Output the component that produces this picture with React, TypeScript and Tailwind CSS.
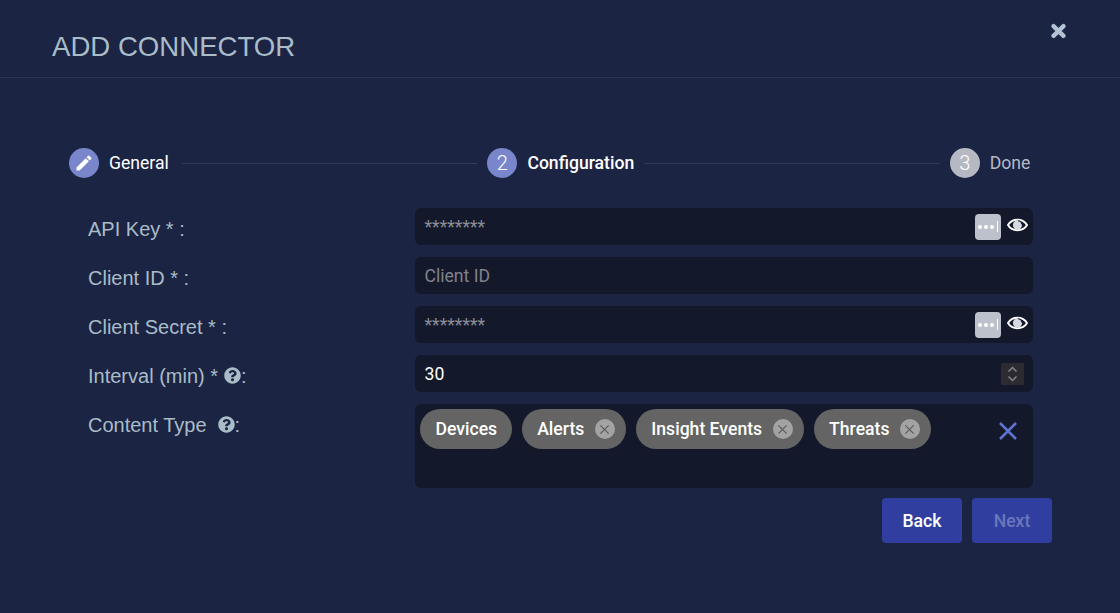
import { FaQuestionCircle } from 'react-icons/fa';
import { MdEdit } from 'react-icons/md';

function Connector({ wide = false }: { wide?: boolean }) {
    return <div className={`mr-[10px] h-px flex-1 bg-[#33395a] ${wide ? 'ml-[13px]' : 'ml-[10px]'}`} />;
}

function Step({ icon, label, state }: { icon: React.ReactNode; label: string; state: 'done' | 'active' | 'todo' }) {
    return (
        <div className="flex items-center">
            <div
                className={`flex h-[30px] w-[30px] items-center justify-center rounded-full text-[20px] font-light text-white ${state === 'todo' ? 'bg-[#b6b9c3]' : 'bg-[#7986cb]'}`}
            >
                {icon}
            </div>
            <span className={`ml-[10px] text-[17.6px] ${state === 'todo' ? 'text-[#b6b9c3]' : state === 'active' ? 'font-medium text-white' : 'text-white'}`}>{label}</span>
        </div>
    );
}

function Label({ children }: { children: React.ReactNode }) {
    return <div className="flex h-[37px] w-[327px] shrink-0 items-center pt-[4px] font-['Liberation_Sans',sans-serif] text-[20px] text-[#a9bcc8]">{children}</div>;
}

function KeyBadge() {
    return (
        <div className="flex h-[26px] w-[26px] items-center justify-center gap-[2px] rounded-[4px] bg-[#bcc1cb]">
            <span className="h-1 w-1 rounded-full bg-white" />
            <span className="h-1 w-1 rounded-full bg-white" />
            <span className="h-1 w-1 rounded-full bg-white" />
            <span className="ml-[1px] h-[11px] w-px bg-white" />
        </div>
    );
}

function EyeIcon() {
    return (
        <svg viewBox="0 0 21 16" className="mb-[3px] ml-[6px] h-4 w-[21px]" fill="none">
            <path d="M1 8C5 1 16 1 20 8C16 15 5 15 1 8Z" stroke="#ffffff" strokeWidth="1.9" />
            <circle cx="10.5" cy="8" r="4.6" fill="#d5d9e0" />
            <path d="M11 3.8a4 4 0 0 1 3.8 3.6" stroke="#13182b" strokeWidth="1.1" />
        </svg>
    );
}

function SecretInput({ label }: { label: string }) {
    return (
        <div className="flex">
            <Label>{label}</Label>
            <div className="flex h-[37px] flex-1 items-center rounded-[6px] bg-[#13182b] pl-[9.5px] pr-[5px]">
                <span className="flex-1 pt-px text-[17.6px] text-[#8a8d96]">********</span>
                <KeyBadge />
                <EyeIcon />
            </div>
        </div>
    );
}

function Chip({ label, removable = true }: { label: string; removable?: boolean }) {
    return (
        <div className={`flex h-10 items-center rounded-full bg-[#646464] pl-[15.5px] text-[17.6px] font-medium text-white ${removable ? 'pr-[11px]' : 'pr-[14.5px]'}`}>
            {label}
            {removable && (
                <span className="ml-[10.5px] flex h-5 w-5 items-center justify-center rounded-full bg-[#a3a3a3]">
                    <svg viewBox="0 0 12 12" className="h-[11px] w-[11px]" fill="none" stroke="#5f5f5f" strokeWidth="1.5">
                        <path d="M1.5 1.5l9 9M10.5 1.5l-9 9" />
                    </svg>
                </span>
            )}
        </div>
    );
}

export default function App() {
    return (
        <div className="h-[613px] w-[1120px] overflow-hidden bg-[#1b2443] font-['Roboto',sans-serif]">
            <div className="relative h-[78px] border-b border-[#2e3554] pl-[52px] pt-[30px]">
                <h2 className="font-['Liberation_Sans',sans-serif] text-[27.6px] leading-[34px] text-[#a9bcc8]">ADD CONNECTOR</h2>
                <svg viewBox="0 0 17 16" className="absolute left-[1050px] top-[23px] h-4 w-[17px]" fill="none" stroke="#b3c3d2" strokeWidth="4.4" strokeLinecap="round">
                    <path d="M3.5 3.2l10 9.6M13.5 3.2l-10 9.6" />
                </svg>
            </div>

            <div className="ml-[69px] mr-[89.6px] mt-[70px] flex items-center">
                <Step icon={<MdEdit className="text-[20px]" />} label="General" state="done" />
                <Connector wide />
                <Step icon="2" label="Configuration" state="active" />
                <Connector />
                <Step icon="3" label="Done" state="todo" />
            </div>

            <div className="ml-[88px] mr-[87px] mt-[30px] flex flex-col gap-3">
                <SecretInput label="API Key * :" />
                <div className="flex">
                    <Label>Client ID * :</Label>
                    <div className="flex h-[37px] flex-1 items-center rounded-[6px] bg-[#13182b] pl-[9.5px] pt-px text-[17.6px] text-[#80838b]">Client ID</div>
                </div>
                <SecretInput label="Client Secret * :" />
                <div className="flex">
                    <Label>
                        Interval (min) *<FaQuestionCircle className="ml-[6px] text-[17px]" />:
                    </Label>
                    <div className="flex h-[37px] flex-1 items-center rounded-[6px] bg-[#13182b] pl-[9.5px] pr-[9px] text-[17.6px] text-white">
                        <span className="flex-1 pt-px">30</span>
                        <div className="flex h-[22px] w-[23px] items-center justify-center bg-[#2b2b31]">
                            <svg viewBox="0 0 23 22" className="h-[22px] w-[23px]" fill="none" stroke="#85858a" strokeWidth="1.5">
                                <path d="M7.5 8.5l4-4 4 4M7.5 13.5l4 4 4-4" />
                            </svg>
                        </div>
                    </div>
                </div>
                <div className="flex">
                    <Label>
                        Content Type<FaQuestionCircle className="ml-[11px] text-[17px]" />:
                    </Label>
                    <div className="flex h-[84px] flex-1 items-start rounded-[6px] bg-[#13182b] pl-[5px] pt-[5px]">
                        <div className="flex flex-1 gap-[10px]">
                            <Chip label="Devices" removable={false} />
                            <Chip label="Alerts" />
                            <Chip label="Insight Events" />
                            <Chip label="Threats" />
                        </div>
                        <svg viewBox="0 0 20 20" className="mr-[15px] mt-[12px] h-[20px] w-[20px]" fill="none" stroke="#5f73d0" strokeWidth="2.5">
                            <path d="M2 2l16 16M18 2L2 18" />
                        </svg>
                    </div>
                </div>
            </div>

            <div className="mr-[68px] mt-[10px] flex justify-end gap-[10px]">
                <button className="h-[45px] w-20 rounded-[4px] bg-[#303f9f] pt-px text-[17.6px] font-medium text-white">Back</button>
                <button className="h-[45px] w-20 rounded-[4px] bg-[#303f9f] pt-px text-[17.6px] font-medium text-[#6a76ba]">Next</button>
            </div>
        </div>
    );
}
